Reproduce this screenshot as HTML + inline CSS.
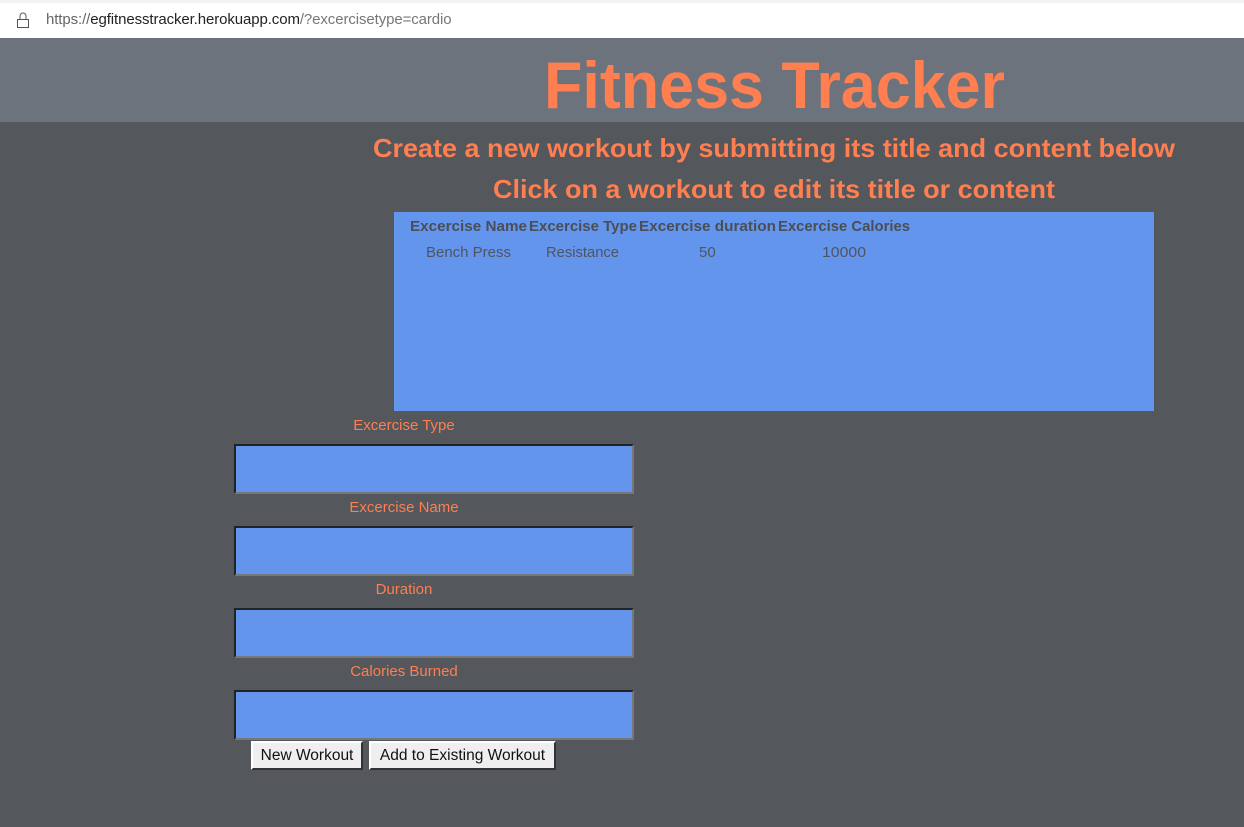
<!DOCTYPE html>
<html><head><style>
body{margin:0;width:1244px;height:827px;background:#54575c;font-family:"Liberation Sans",sans-serif;position:relative;overflow:hidden}
.a{position:absolute}
.url{top:0;left:0;width:1244px;height:38px;background:#fff;border-top:3px solid #f1f3f4;box-sizing:border-box}
.hdr{top:38px;left:0;width:1244px;height:84px;background:#6c737c}
.lbl{color:#ff7f50;font-size:15px;width:340px;left:234px;text-align:center}
.inp{left:234px;width:400px;height:50px;background:#6495ed;box-sizing:border-box;border-top:2px solid #222;border-left:2px solid #222;border-right:2px solid #777;border-bottom:2px solid #777}
.btn{top:741px;height:29px;background:#efefef;box-sizing:border-box;border:2px solid;border-color:#fff #333 #333 #fff;font-size:15.5px;color:#111;text-align:center;line-height:25px}
</style></head><body>
<div class="a url">
<svg class="a" style="left:15px;top:8px" width="16" height="18"><rect x="2.5" y="8.5" width="11" height="8" fill="none" stroke="#555"/><path d="M5 8.5V5a3 3 0 0 1 6 0v3.5" fill="none" stroke="#555"/></svg>
<div class="a" style="left:46px;top:8px;font-size:15px;color:#222;letter-spacing:-0.1px"><span style="color:#666">https://</span>egfitnesstracker.herokuapp.com<span style="color:#777">/?excercisetype=cardio</span></div>
</div>
<div class="a hdr"></div>
<svg class="a" style="left:0;top:38px" width="1244" height="170">
<text x="544" y="70" font-family="Liberation Sans" font-weight="bold" font-size="66" fill="#ff7f50" textLength="461" lengthAdjust="spacingAndGlyphs">Fitness Tracker</text>
<text x="373" y="119" font-family="Liberation Sans" font-weight="bold" font-size="26" fill="#ff7f50" textLength="802" lengthAdjust="spacingAndGlyphs">Create a new workout by submitting its title and content below</text>
<text x="493" y="160" font-family="Liberation Sans" font-weight="bold" font-size="26" fill="#ff7f50" textLength="562" lengthAdjust="spacingAndGlyphs">Click on a workout to edit its title or content</text>
</svg>
<div class="a" style="left:394px;top:212px;width:760px;height:199px;background:#6495ed"></div>
<svg class="a" style="left:394px;top:212px" width="760" height="60">
<g font-family="Liberation Sans" font-weight="bold" font-size="15" fill="#4a4e56">
<text x="16" y="19" textLength="117" lengthAdjust="spacingAndGlyphs">Excercise Name</text>
<text x="135" y="19" textLength="108" lengthAdjust="spacingAndGlyphs">Excercise Type</text>
<text x="245" y="19" textLength="137" lengthAdjust="spacingAndGlyphs">Excercise duration</text>
<text x="384" y="19" textLength="132" lengthAdjust="spacingAndGlyphs">Excercise Calories</text>
</g>
<g font-family="Liberation Sans" font-size="15" fill="#4f5560">
<text x="32" y="45" textLength="85" lengthAdjust="spacingAndGlyphs">Bench Press</text>
<text x="152" y="45" textLength="73" lengthAdjust="spacingAndGlyphs">Resistance</text>
<text x="305" y="45">50</text>
<text x="428" y="45" textLength="44" lengthAdjust="spacingAndGlyphs">10000</text>
</g>
</svg>
<div class="a lbl" style="top:417px">Excercise Type</div>
<div class="a inp" style="top:444px"></div>
<div class="a lbl" style="top:499px">Excercise Name</div>
<div class="a inp" style="top:526px"></div>
<div class="a lbl" style="top:581px">Duration</div>
<div class="a inp" style="top:608px"></div>
<div class="a lbl" style="top:663px">Calories Burned</div>
<div class="a inp" style="top:690px"></div>
<div class="a btn" style="left:251px;width:112px">New Workout</div>
<div class="a btn" style="left:369px;width:187px">Add to Existing Workout</div>
</body></html>
